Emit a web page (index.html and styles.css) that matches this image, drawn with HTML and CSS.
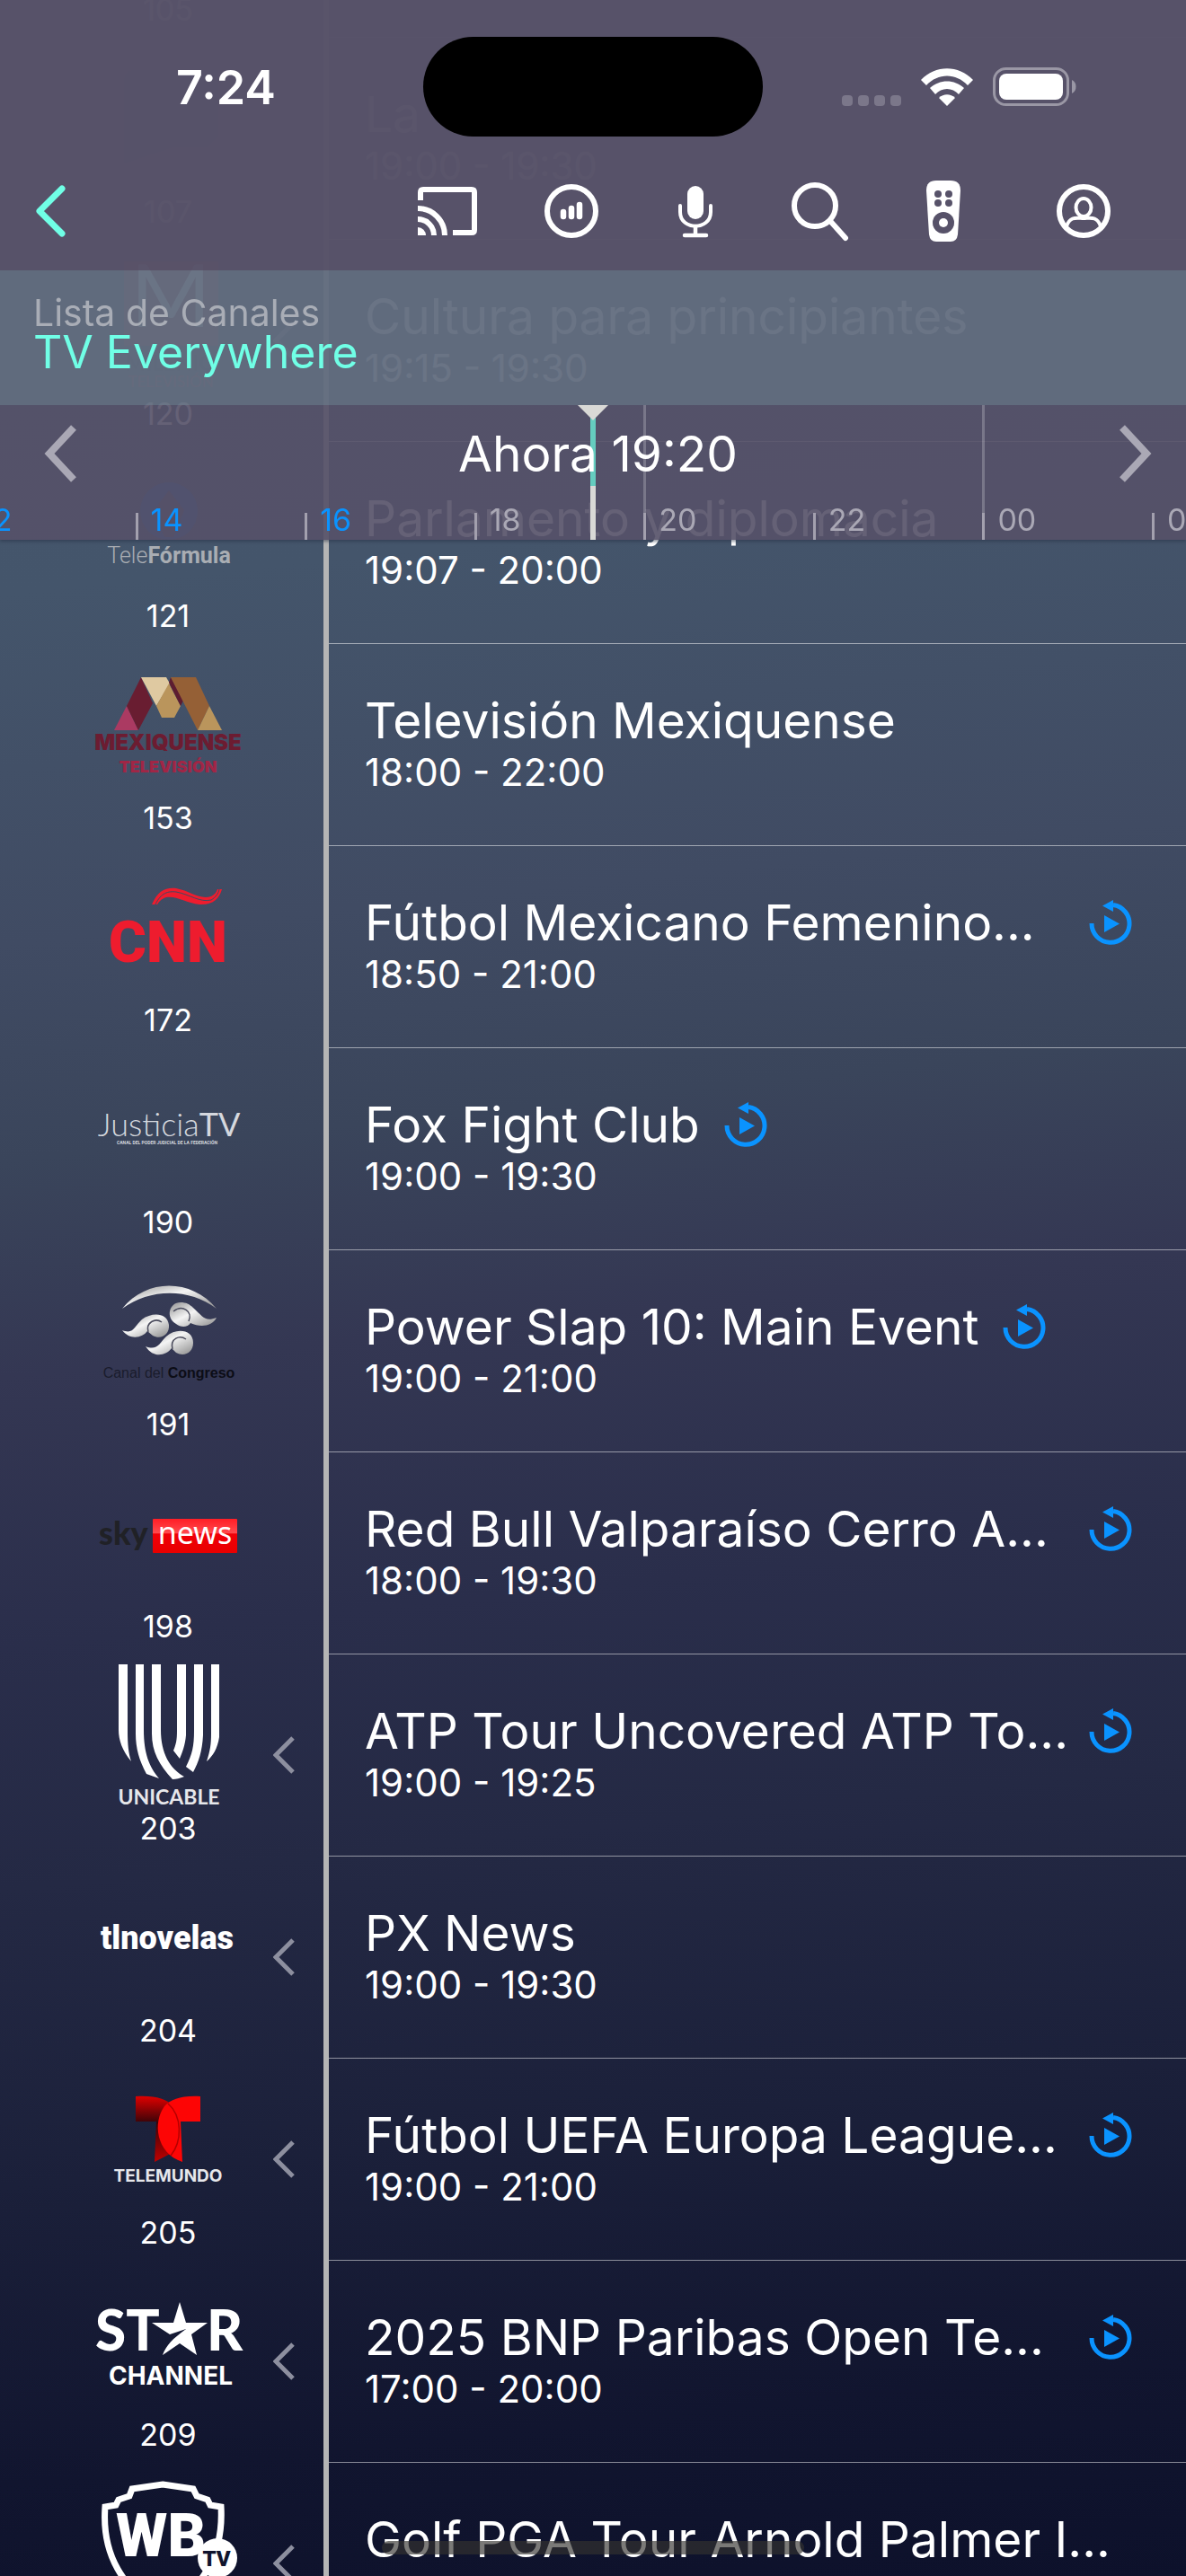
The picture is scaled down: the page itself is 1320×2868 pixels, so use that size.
FILE: index.html
```html
<!DOCTYPE html>
<html lang="es">
<head>
    <meta charset="UTF-8">
    <meta name="viewport" content="width=device-width, initial-scale=1.0">
    <title>Lista de Canales</title>
    <link rel="stylesheet" href="styles.css">
</head>
<body>
    <svg class="defs" aria-hidden="true">
        <linearGradient id="silver" x1="0" y1="0" x2="1" y2="1">
            <stop offset="0" stop-color="#909090"/>
            <stop offset="0.45" stop-color="#f4f4f4"/>
            <stop offset="1" stop-color="#8c8c8c"/>
        </linearGradient>
        <linearGradient id="skyRed" x1="0" y1="0" x2="0" y2="1">
            <stop offset="0" stop-color="#ff1e26"/>
            <stop offset="0.42" stop-color="#ff4a4e"/>
            <stop offset="0.44" stop-color="#f00008"/>
            <stop offset="1" stop-color="#e80000"/>
        </linearGradient>
        <linearGradient id="teleDark" x1="0" y1="0" x2="0" y2="1">
            <stop offset="0" stop-color="#e00000"/>
            <stop offset="0.4" stop-color="#3a0408"/>
            <stop offset="1" stop-color="#c00000"/>
        </linearGradient>
        <symbol id="replay" viewBox="0 0 50 50">
            <path d="M4 26A21 21 0 1 0 28 5.5" fill="none" stroke="#0a93ff" stroke-width="5"/>
            <path d="M16 6.5L28 0V13Z" fill="#0a93ff"/>
            <path d="M18 17V36L35 26.5Z" fill="#0a93ff"/>
        </symbol>
        <symbol id="chevron" viewBox="0 0 24 42">
            <path d="M22 2L3 21L22 40" fill="none" stroke="currentColor" stroke-width="5"/>
        </symbol>
    </svg>

    <header class="header">
        <div class="top">
            <div class="status">
                <span class="clock">7:24</span>
                <span class="island"></span>
                <div class="status-icons">
                    <span class="signal"><i></i><i></i><i></i><i></i></span>
                    <svg class="wifi" viewBox="0 0 58 42">
                        <path d="M0 13C16-4 42-4 58 13L52 19C39 5 19 5 6 19Z" fill="#fff"/>
                        <path d="M10 22C21 12 37 12 48 22L42 29C35 21 23 21 16 29Z" fill="#fff"/>
                        <path d="M20 33C25 28 33 28 38 33L29 42Z" fill="#fff"/>
                    </svg>
                    <svg class="battery" viewBox="0 0 94 43">
                        <rect x="1.5" y="1.5" width="82" height="40" rx="13" fill="none" stroke="#9a97a5" stroke-width="3"/>
                        <rect x="7" y="7" width="71" height="29" rx="8" fill="#fff"/>
                        <path d="M88 14C94 16 94 27 88 29Z" fill="#9a97a5"/>
                    </svg>
                </div>
            </div>
            <nav class="toolbar">
                <button class="back" aria-label="Atrás">
                    <svg viewBox="0 0 36 60"><path d="M31 5L6 30L31 55" fill="none" stroke="#70ffe6" stroke-width="7" stroke-linecap="round" stroke-linejoin="round"/></svg>
                </button>
                <div class="tools">
                    <button class="tool" aria-label="Transmitir">
                        <svg viewBox="0 0 66 70">
                            <path d="M3 23V14Q3 11 6 11H60Q63 11 63 14V56Q63 59 60 59H39" fill="none" stroke="#fff" stroke-width="6"/>
                            <path d="M0 53A9 9 0 0 1 9 62H0Z" fill="#fff"/>
                            <path d="M0 44A18 18 0 0 1 18 62M0 32A30 30 0 0 1 30 62" fill="none" stroke="#fff" stroke-width="6"/>
                        </svg>
                    </button>
                    <button class="tool" aria-label="Actividad">
                        <svg viewBox="0 0 66 70">
                            <circle cx="33" cy="35" r="27" fill="none" stroke="#fff" stroke-width="6"/>
                            <path d="M24 36V41M33 32V41M42 28V41" stroke="#fff" stroke-width="6.5" stroke-linecap="round"/>
                        </svg>
                    </button>
                    <button class="tool" aria-label="Buscar por voz">
                        <svg viewBox="0 0 66 70">
                            <rect x="24" y="7" width="18" height="37" rx="9" fill="#fff"/>
                            <path d="M16 29V36C16 57 50 57 50 36V29" fill="none" stroke="#fff" stroke-width="4" stroke-linecap="round"/>
                            <path d="M33 52V62M21 62H45" fill="none" stroke="#fff" stroke-width="4.5" stroke-linecap="round"/>
                        </svg>
                    </button>
                    <button class="tool" aria-label="Buscar">
                        <svg viewBox="0 0 66 70">
                            <circle cx="28" cy="29" r="23" fill="none" stroke="#fff" stroke-width="6"/>
                            <path d="M45 46L62 65" stroke="#fff" stroke-width="6" stroke-linecap="round"/>
                        </svg>
                    </button>
                    <button class="tool" aria-label="Control remoto">
                        <svg viewBox="0 0 66 70">
                            <path d="M25 1H41Q52 1 52 12L49 61Q48 69 41 69H25Q18 69 17 61L14 12Q14 1 25 1Z" fill="#fff"/>
                            <g fill="#575269">
                                <circle cx="27" cy="16" r="4"/><circle cx="39" cy="16" r="4"/>
                                <circle cx="27" cy="26" r="4"/><circle cx="39" cy="26" r="4"/>
                                <circle cx="33" cy="48" r="12"/>
                            </g>
                            <circle cx="33" cy="48" r="5" fill="#fff"/>
                        </svg>
                    </button>
                    <button class="tool account" aria-label="Mi cuenta">
                        <svg viewBox="0 0 66 70">
                            <circle cx="33" cy="35" r="27" fill="none" stroke="#fff" stroke-width="6"/>
                            <ellipse cx="33" cy="31" rx="8.5" ry="10" fill="none" stroke="#fff" stroke-width="4"/>
                            <path d="M14 52C18 40 26 43 33 43C40 43 48 40 52 52" fill="none" stroke="#fff" stroke-width="4"/>
                        </svg>
                    </button>
                </div>
            </nav>
        </div>
        <div class="selector">
            <span class="selector-label">Lista de Canales</span>
            <a class="selector-value" href="#">TV Everywhere</a>
        </div>
        <div class="timeline">
            <span class="playhead"></span>
            <button class="step" aria-label="Anterior">
                <svg viewBox="0 0 36 64"><path d="M33 3L6 32L33 61" fill="none" stroke="#aaa8b5" stroke-width="8"/></svg>
            </button>
            <span class="now">Ahora 19:20</span>
            <button class="step" aria-label="Siguiente">
                <svg viewBox="0 0 36 64"><path d="M3 3L30 32L3 61" fill="none" stroke="#aaa8b5" stroke-width="8"/></svg>
            </button>
            <div class="hours">
                <span class="hour past">12</span>
                <span class="hour past">14</span>
                <span class="hour past">16</span>
                <span class="hour">18</span>
                <span class="hour tall">20</span>
                <span class="hour">22</span>
                <span class="hour tall">00</span>
                <span class="hour">02</span>
            </div>
        </div>
    </header>

    <main class="guide">
        <div class="row">
            <div class="channel"><div class="logo"></div><span class="number">105</span></div>
            <div class="program"></div>
        </div>
        <div class="row">
            <div class="channel">
                <svg class="logo" viewBox="0 0 180 160"><path d="M52 26H146V100L134 112H96L41 130V40Q41 26 52 26Z" fill="#26488c"/></svg>
                <span class="number">107</span>
            </div>
            <div class="program">
                <div class="line"><span class="title">La</span></div>
                <span class="time">19:00 - 19:30</span>
            </div>
        </div>
        <div class="row">
            <div class="channel">
                <svg class="logo" viewBox="0 0 180 160">
                    <rect x="41" y="14" width="105" height="94" fill="#a03c50"/>
                    <text class="milenio-m" x="93" y="87">M</text>
                    <text class="milenio" x="93" y="136">MILENIO</text>
                    <text class="milenio-tv" x="93" y="154">TELEVISIÓN</text>
                </svg>
                <span class="number">120</span>
                <svg class="more"><use href="#chevron"/></svg>
            </div>
            <div class="program">
                <div class="line"><span class="title">Cultura para principiantes</span></div>
                <span class="time">19:15 - 19:30</span>
            </div>
        </div>
        <div class="row">
            <div class="channel">
                <svg class="logo" viewBox="0 0 180 160">
                    <circle cx="91" cy="67" r="32" fill="#2057a8"/>
                    <path d="M91 44L108 66L96 96H86L74 66Z" fill="#555168"/>
                    <text class="formula" x="91" y="125">Tele<tspan class="heavy">Fórmula</tspan></text>
                </svg>
                <span class="number">121</span>
            </div>
            <div class="program">
                <div class="line"><span class="title">Parlamento y diplomacia</span></div>
                <span class="time">19:07 - 20:00</span>
            </div>
        </div>
        <div class="row">
            <div class="channel">
                <svg class="logo" viewBox="0 0 180 160">
                    <path d="M30 86L44 59L57 86Z" fill="#ab3a62"/>
                    <path d="M60 27L44 59L57 86L73 56Z" fill="#691d31"/>
                    <path d="M60 27H88L92 34L77 59Z" fill="#dfc9a1"/>
                    <path d="M91 34L104 59L97 72H83L77 59Z" fill="#ba955c"/>
                    <path d="M91 33L93 27L107 53L104 59Z" fill="#5d1c30"/>
                    <path d="M93 27H121L136 59L123 86Z" fill="#956036"/>
                    <path d="M136 59L150 86H123Z" fill="#ba955c"/>
                    <text class="mexi" x="90" y="108">MEXIQUENSE</text>
                    <text class="mexi-tv" x="90" y="133">TELEVISIÓN</text>
                </svg>
                <span class="number">153</span>
            </div>
            <div class="program">
                <div class="line"><span class="title">Televisión Mexiquense</span></div>
                <span class="time">18:00 - 22:00</span>
            </div>
        </div>
        <div class="row">
            <div class="channel">
                <svg class="logo" viewBox="0 0 180 160">
                    <path d="M72 55C79 40 86 36 99 37C115 40 125 50 138 46C142 44 144 41 145 38H150C147 49 139 56 125 55C110 53 99 45 88 47C82 49 80 52 78 55Z" fill="#ee1c2e"/>
                    <path d="M76 55C82 42 90 40 99 41C115 44 125 53 138 50C143 47 146 43 147 38" fill="none" stroke="#3f4a62"/>
                    <text class="cnn" x="90" y="119">CNN</text>
                </svg>
                <span class="number">172</span>
            </div>
            <div class="program">
                <div class="line full"><span class="title">Fútbol Mexicano Femenino...</span><svg class="replay"><use href="#replay"/></svg></div>
                <span class="time">18:50 - 21:00</span>
            </div>
        </div>
        <div class="row">
            <div class="channel">
                <svg class="logo" viewBox="0 0 180 160">
                    <text class="justicia" x="91" y="88">Justicia<tspan class="medium">TV</tspan></text>
                    <text class="justicia-sub" x="89" y="97">CANAL DEL PODER JUDICIAL DE LA FEDERACIÓN</text>
                </svg>
                <span class="number">190</span>
            </div>
            <div class="program">
                <div class="line"><span class="title">Fox Fight Club</span><svg class="replay"><use href="#replay"/></svg></div>
                <span class="time">19:00 - 19:30</span>
            </div>
        </div>
        <div class="row">
            <div class="channel">
                <svg class="logo" viewBox="0 0 180 160">
                    <g fill="url(#silver)">
                        <path d="M39 55C66 21 116 21 144 55C114 32 70 32 39 55Z"/>
                        <path d="M118 54C129 64 131 70 144 65C139 75 126 76 115 71C112 76 104 76 99 72C87 65 91 48 104 48C110 48 114 50 118 54Z"/>
                        <path d="M39 79C52 84 52 75 61 67C72 59 89 59 91 73C92 84 82 90 73 85L67 80C62 87 48 91 39 79Z"/>
                        <path d="M65 97C78 102 80 94 88 86C99 76 118 78 118 93C118 104 108 109 99 104L94 99C88 107 74 111 65 97Z"/>
                    </g>
                    <g fill="none" stroke="#4a4b5c" stroke-width="1.5">
                        <path d="M96 58C106 50 118 58 113 69"/>
                        <path d="M68 81C65 70 76 65 83 70"/>
                        <path d="M95 100C92 88 103 84 110 89"/>
                    </g>
                    <text class="congreso" x="91" y="132">Canal del <tspan class="heavy">Congreso</tspan></text>
                </svg>
                <span class="number">191</span>
            </div>
            <div class="program">
                <div class="line"><span class="title">Power Slap 10: Main Event</span><svg class="replay"><use href="#replay"/></svg></div>
                <span class="time">19:00 - 21:00</span>
            </div>
        </div>
        <div class="row">
            <div class="channel">
                <svg class="logo" viewBox="0 0 180 160">
                    <text class="sky" x="13" y="93">sky</text>
                    <rect x="73" y="64" width="94" height="38" rx="1" fill="url(#skyRed)"/>
                    <text class="news" x="120" y="92">news</text>
                </svg>
                <span class="number">198</span>
            </div>
            <div class="program">
                <div class="line full"><span class="title">Red Bull Valparaíso Cerro A...</span><svg class="replay"><use href="#replay"/></svg></div>
                <span class="time">18:00 - 19:30</span>
            </div>
        </div>
        <div class="row">
            <div class="channel">
                <svg class="logo" viewBox="0 0 180 160">
                    <g fill="#fff">
                        <path d="M35 1H45V76C45 90 46 100 49 109C39 97 35 85 35 74Z"/>
                        <path d="M54 1H63V74C63 100 69 115 80 128L66 123C58 108 54 95 54 78Z"/>
                        <path d="M72 1H82V74C82 100 92 117 108 126C103 128 99 129 95 129C80 113 72 98 72 78Z"/>
                        <path d="M100 1H110V80C109 91 106 99 103 106L96 97C99 90 100 85 100 75Z"/>
                        <path d="M119 1H129V80C128 98 124 110 118 121L110 115C117 101 119 92 119 75Z"/>
                        <path d="M138 1H147V82C145 95 140 103 133 109C137 97 138 90 138 78Z"/>
                    </g>
                    <text class="unicable" x="91" y="157">UNICABLE</text>
                </svg>
                <span class="number">203</span>
                <svg class="more"><use href="#chevron"/></svg>
            </div>
            <div class="program">
                <div class="line full"><span class="title">ATP Tour Uncovered ATP To...</span><svg class="replay"><use href="#replay"/></svg></div>
                <span class="time">19:00 - 19:25</span>
            </div>
        </div>
        <div class="row">
            <div class="channel">
                <svg class="logo" viewBox="0 0 180 160"><text class="tlnovelas" x="89" y="93">tlnovelas</text></svg>
                <span class="number">204</span>
                <svg class="more"><use href="#chevron"/></svg>
            </div>
            <div class="program">
                <div class="line"><span class="title">PX News</span></div>
                <span class="time">19:00 - 19:30</span>
            </div>
        </div>
        <div class="row">
            <div class="channel">
                <svg class="logo" viewBox="0 0 180 160">
                    <path d="M54 32C76 31 87 34 96 43L100 92L75 105L77 60H54Z" fill="url(#teleDark)"/>
                    <path d="M126 32C104 31 94 35 86 43C73 60 76 95 106 105L104 60H126Z" fill="#fd0505"/>
                    <path d="M90 40C106 54 106 82 93 98" fill="none" stroke="#b50000" stroke-width="1.5"/>
                    <text class="telemundo" x="90" y="127">TELEMUNDO</text>
                </svg>
                <span class="number">205</span>
                <svg class="more"><use href="#chevron"/></svg>
            </div>
            <div class="program">
                <div class="line full"><span class="title">Fútbol UEFA Europa League...</span><svg class="replay"><use href="#replay"/></svg></div>
                <span class="time">19:00 - 21:00</span>
            </div>
        </div>
        <div class="row">
            <div class="channel">
                <svg class="logo" viewBox="0 0 180 160">
                    <text class="star" x="9" y="90">ST</text>
                    <path d="M103 36L110 59H134L116 72L122 95L103 82L84 95C88 84 95 77 110 66L92 72L72 59H96Z" fill="#fff"/>
                    <text class="star" x="133" y="90">R</text>
                    <text class="star-sub" x="93" y="128">CHANNEL</text>
                </svg>
                <span class="number">209</span>
                <svg class="more"><use href="#chevron"/></svg>
            </div>
            <div class="program">
                <div class="line full"><span class="title">2025 BNP Paribas Open Te...</span><svg class="replay"><use href="#replay"/></svg></div>
                <span class="time">17:00 - 20:00</span>
            </div>
        </div>
        <div class="row">
            <div class="channel">
                <svg class="logo" viewBox="0 0 180 160">
                    <path d="M84 14L118 19L122 27L134 31L137 37L149 39C152 92 128 132 84 155C40 132 16 92 20 39L32 37L35 31L47 27L50 19Z" fill="none" stroke="#fff" stroke-width="7"/>
                    <text class="wb" x="82" y="94">WB</text>
                    <circle cx="145" cy="96" r="22" fill="#fff"/>
                    <text class="wb-tv" x="144" y="105">TV</text>
                </svg>
                <svg class="more"><use href="#chevron"/></svg>
            </div>
            <div class="program">
                <div class="line"><span class="title">Golf PGA Tour Arnold Palmer I...</span></div>
            </div>
        </div>
    </main>

    <div class="home-indicator"></div>
</body>
</html>
```

FILE: styles.css
```css
* { box-sizing: border-box; }
html { height: 100%; overflow: hidden; }
body {
    margin: 0;
    height: 100%;
    overflow: hidden;
    color: #fff;
    font-family: Inter, "Liberation Sans", sans-serif;
    background: linear-gradient(174deg, #46586e 0%, #44556b 22%, #404b63 35%, #3a455b 43%, #343753 51%, #2a2e4b 61%, #242944 70%, #1b203a 81%, #11152f 92%, #0d112b 100%);
}
button { padding: 0; border: none; background: none; cursor: pointer; }
svg { display: block; }
.defs { position: absolute; width: 0; height: 0; }

/* header */
.header { position: fixed; top: 0; left: 0; right: 0; z-index: 2; box-shadow: 0 2px 3px rgba(40, 50, 70, 0.5); }
.top { background: rgba(87, 82, 105, 0.985); }
.status { display: grid; grid-template-columns: 1fr 378px 1fr; height: 169px; padding-top: 41px; }
.clock { height: 114px; line-height: 114px; padding-left: 32px; text-align: center; font-size: 52px; font-weight: 600; }
.island { height: 111px; border-radius: 56px; background: #000; }
.status-icons { display: flex; align-items: center; height: 111px; padding-left: 88px; }
.signal { display: flex; gap: 6px; width: 66px; padding-top: 30px; margin-right: 22px; }
.signal i { width: 12px; height: 12px; border-radius: 4px; background: #7b778a; }
.wifi { width: 58px; height: 42px; margin-right: 22px; }
.battery { width: 94px; height: 43px; }

.toolbar { display: flex; align-items: center; justify-content: space-between; height: 132px; padding: 0 81px 0 38px; }
.back svg { width: 36px; height: 60px; }
.tools { display: flex; gap: 72px; }
.tool svg { width: 66px; height: 70px; }
.account { margin-left: 18px; }

.selector { display: flex; flex-direction: column; justify-content: center; height: 150px; padding: 0 37px 12px; background: rgba(98, 109, 126, 0.95); }
.selector-label { font-size: 41px; line-height: 44px; color: #a9adb6; }
.selector-value { font-size: 50px; line-height: 44px; color: #70ffe6; text-decoration: none; }

.timeline { position: relative; display: flex; align-items: flex-start; justify-content: space-between; height: 150px; padding: 22px 38px 0 49px; background: rgba(86, 81, 104, 0.91); }
.step svg { width: 36px; height: 64px; }
.now { position: relative; line-height: 64px; font-size: 55px; }
.playhead { position: absolute; top: 0; bottom: 0; left: 50%; width: 6px; margin-left: -3px; background: linear-gradient(#65cdbf 90px, #d9d9d6 90px); }
.playhead::before { content: ""; position: absolute; top: 0; left: -14px; border: 17px solid transparent; border-top-color: #d9d9d6; border-bottom: 0; }
.hours { position: absolute; left: -38px; right: 38px; bottom: 0; display: flex; height: 150px; align-items: flex-end; pointer-events: none; }
.hour { position: relative; flex: 0 0 calc(100% / 7); padding: 0 0 4px 17px; font-size: 34px; line-height: 36px; color: #aaa8b5; }
.hour::before { content: ""; position: absolute; left: 0; bottom: 0; width: 3px; height: 30px; background: #a3a0ae; }
.tall::after { content: ""; position: absolute; left: 0; bottom: 30px; width: 3px; height: 120px; background: rgba(255, 255, 255, 0.22); }
.past { color: #0a93ff; }

/* guide, scrolled a few rows down */
.guide { margin-top: -183px; }
.row { display: flex; height: 225px; }
.channel { position: relative; flex: none; width: 366px; border-right: 6px solid #b5b5b5; padding: 10px 0 0 97px; }
.logo { width: 180px; height: 160px; }
.number { display: block; width: 180px; line-height: 48px; text-align: center; font-size: 34px; }
.more { position: absolute; top: 91px; right: 32px; width: 24px; height: 42px; color: #8d8f9f; }
.program { flex: 1; min-width: 0; padding: 53px 59px 0 40px; border-bottom: 1px solid rgba(255, 255, 255, 0.5); }
.line { display: flex; align-items: center; gap: 26px; height: 64px; }
.full { justify-content: space-between; gap: 0; }
.title { font-size: 55px; line-height: 64px; white-space: nowrap; }
.time { display: block; font-size: 42px; line-height: 52px; }
.replay { flex: none; width: 50px; height: 50px; }

/* channel logos */
.logo text { text-anchor: middle; fill: #fff; font-family: Inter, sans-serif; }
.heavy { font-weight: 700; }
.medium { font-weight: 400; }
.logo .milenio-m { font: 400 96px Lato, sans-serif; }
.logo .milenio { font: 700 24px Lato, sans-serif; fill: #333a4a; }
.logo .milenio-tv { font: 400 17px Lato, sans-serif; fill: #a03c50; }
.logo .formula { font: 300 25px Roboto, sans-serif; fill: #a9adb3; }
.logo .mexi { font-size: 24px; font-weight: 900; fill: #6c1c31; }
.logo .mexi-tv { font-size: 18px; font-weight: 900; fill: #a02646; }
.logo .cnn { font: 900 64px Roboto, sans-serif; fill: #ee1c2e; }
.logo .justicia { font: 300 36px Lato, sans-serif; fill: #d5d8de; }
.logo .justicia-sub { font: 700 5px Roboto, sans-serif; fill: #d5d8de; }
.logo .congreso { font: 400 16px "Liberation Sans", sans-serif; fill: #1a1c2c; }
.congreso .heavy { fill: #0c0d16; }
.logo .sky { text-anchor: start; font: 900 36px Lato, sans-serif; fill: #202126; }
.logo .news { font: 400 34px "Noto Sans", sans-serif; }
.logo .unicable { font: 700 23px Lato, sans-serif; fill: #e6e7eb; }
.logo .tlnovelas { font: 900 36px Roboto, sans-serif; }
.logo .telemundo { font: 700 19px Inter, sans-serif; fill: #e6e7eb; }
.logo .star { text-anchor: start; font: 900 62px Lato, sans-serif; }
.logo .star-sub { font: 700 28px Inter, sans-serif; }
.logo .wb { font: 900 66px Roboto, sans-serif; }
.logo .wb-tv { font: 900 24px Roboto, sans-serif; fill: #10142d; }

.home-indicator { position: fixed; left: 50%; bottom: 24px; z-index: 3; width: 470px; height: 15px; margin-left: -235px; border-radius: 8px; background: rgba(52, 50, 48, 0.65); }
```
